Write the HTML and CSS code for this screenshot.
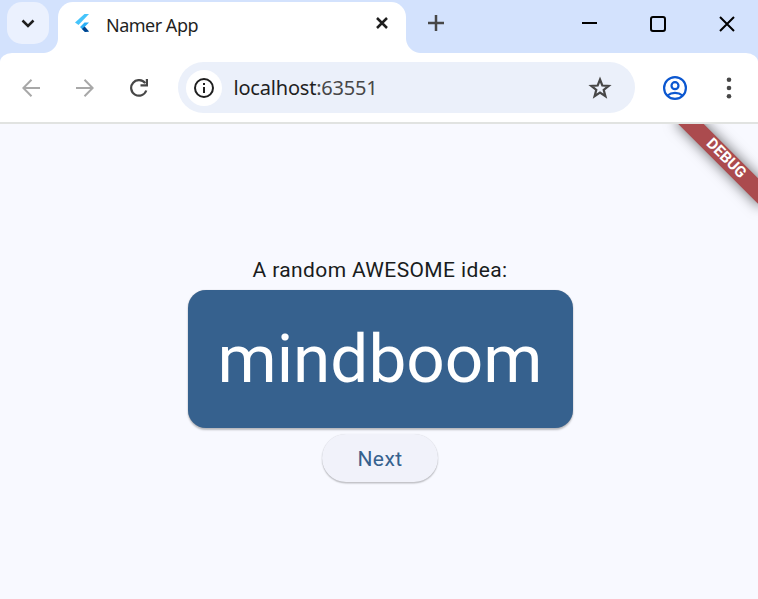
FILE: index.html
```
<!DOCTYPE html>
<html lang="en">
<head>
<meta charset="utf-8">
<title>Namer App</title>
<link rel="stylesheet" href="styles.css">
</head>
<body>
<div class="window">
  <header class="tabstrip">
    <button class="tab-search" aria-label="Search tabs"><svg width="14" height="9" viewBox="0 0 14 9"><path d="M1.500 1.500 7 7l5.500-5.500" fill="none" stroke="#1f1f1f" stroke-width="2.500"/></svg></button>
    <div class="tab">
      <svg class="favicon" width="15" height="19" viewBox="0 0 15 19"><path d="M9.500 0H14L3.500 11 0 8.500z" fill="#45c4fb"/><path d="M9.500 8.500H14L9.500 13l4.500 4.500-4 .5-5-5z" fill="#29aef6"/><path d="m7 15 2.700-2.500L14 17.500l-4 .5z" fill="#01418b"/></svg>
      <span class="tab-title">Namer App</span>
      <svg class="tab-close" width="12" height="12" viewBox="0 0 12 12"><path d="m1 1 10 10M11 1 1 11" stroke="#1f1f1f" stroke-width="2.500"/></svg>
    </div>
    <svg class="new-tab" width="16" height="16" viewBox="0 0 16 16"><path d="M8 0v16M0 8h16" stroke="#474747" stroke-width="2.500"/></svg>
    <div class="controls">
      <svg width="15" height="16" viewBox="0 0 15 16"><path d="M0 8h15" stroke="#000" stroke-width="2"/></svg>
      <svg width="16" height="16" viewBox="0 0 16 16"><rect x="1" y="1" width="14" height="14" rx="2" fill="none" stroke="#000" stroke-width="2"/></svg>
      <svg width="16" height="16" viewBox="0 0 16 16"><path d="m1 1 14 14M15 1 1 15" stroke="#000" stroke-width="2"/></svg>
    </div>
  </header>
  <nav class="toolbar">
    <svg class="nav-icon back" width="18" height="18" viewBox="0 0 18 18"><path d="M18 9H1.500M9.500.800 1.300 9l8.200 8.200" fill="none" stroke="#a8a8a8" stroke-width="2"/></svg>
    <svg class="nav-icon forward" width="18" height="18" viewBox="0 0 18 18"><path d="M0 9h16.500M8.500.800 16.700 9l-8.200 8.200" fill="none" stroke="#a8a8a8" stroke-width="2"/></svg>
    <svg class="nav-icon reload" width="18" height="18" viewBox="0 0 18 18"><path d="M16.300 11.500A7.800 7.800 0 1 1 15.200 4.200" fill="none" stroke="#474747" stroke-width="2.200"/><path d="M15.800 0H18v7.500h-7.500V5.300h5.300z" fill="#474747"/></svg>
    <div class="address">
      <span class="site-info"><svg width="20" height="20" viewBox="0 0 20 20"><circle cx="10" cy="10" r="9" fill="none" stroke="#1f1f1f" stroke-width="2"/><path d="M9 5h2v2H9zM9 9h2v6H9z" fill="#1f1f1f"/></svg></span>
      <span class="url">localhost<span class="port">:63551</span></span>
      <svg class="star" width="24" height="24" viewBox="0 0 24 24"><path d="m12 3.500 2.300 6 6.400.4-5 4 1.700 6.300-5.400-3.600-5.400 3.600 1.700-6.300-5-4 6.400-.4z" fill="none" stroke="#474747" stroke-width="2.200"/></svg>
    </div>
    <svg class="profile" width="24" height="24" viewBox="0 0 24 24" fill="none" stroke="#0b57d0" stroke-width="2.200"><circle cx="12" cy="12" r="10.900"/><circle cx="12" cy="9.700" r="3.500"/><path d="M4.500 19.500c4.200-3.600 10.800-3.600 15 0"/></svg>
    <svg class="more" width="6" height="22" viewBox="0 0 6 22" fill="#474747"><circle cx="3" cy="2.700" r="2.300"/><circle cx="3" cy="11" r="2.300"/><circle cx="3" cy="19.300" r="2.300"/></svg>
  </nav>
  <main class="page">
    <p class="caption">A random AWESOME idea:</p>
    <div class="card">mindboom</div>
    <button class="next">Next</button>
    <div class="ribbon">DEBUG</div>
  </main>
</div>
</body>
</html>
```

FILE: styles.css
```
* { box-sizing: border-box; }
body { margin: 0; font-family: Roboto, sans-serif; }
button { border: 0; padding: 0; font: inherit; }
svg { display: block; flex: none; }
.window { width: 758px; height: 599px; display: flex; flex-direction: column; overflow: hidden; background: #d3e2fd; }
.tabstrip { height: 53px; flex: none; display: flex; align-items: flex-start; }
.tab-search { width: 42px; height: 42px; margin: 2px 9px 0 7px; border-radius: 15px; background: #ebf1fe; display: flex; align-items: center; justify-content: center; }
.tab { position: relative; width: 348px; height: 51px; margin-top: 2px; border-radius: 15px 15px 0 0; background: #fff; display: flex; padding: 0 18px 0 17px; }
.tab::before, .tab::after { content: ""; position: absolute; bottom: 0; width: 15px; height: 15px; }
.tab::before { left: -15px; background: radial-gradient(circle at 0 0, transparent 14.5px, #fff 15.5px); }
.tab::after { right: -15px; background: radial-gradient(circle at 100% 0, transparent 14.5px, #fff 15.5px); }
.favicon { margin-top: 12px; }
.tab-title { margin: 10px auto 0 16px; font: 18px/26px "Noto Sans", sans-serif; color: #1f1f1f; letter-spacing: -.5px; }
.tab-close { margin-top: 15px; }
.new-tab { margin: 15px 0 0 22px; }
.controls { display: flex; gap: 53px; margin: 16px 23px 0 auto; }
.controls svg:first-child { margin: -1px 0 0 0; }
.toolbar { height: 71px; flex: none; display: flex; align-items: center; background: #fff; border-bottom: 2px solid #e1e3e1; border-radius: 12px 12px 0 0 / 9px 9px 0 0; padding: 0 26px 0 22px; }
.forward { margin-left: 36px; }
.reload { margin-left: 36px; }
.address { width: 457px; height: 51px; margin-left: 30px; border-radius: 26px; background: #ebf0fa; display: flex; align-items: center; padding: 0 23px 0 8px; }
.site-info { width: 36px; height: 36px; border-radius: 50%; background: #fff; display: flex; align-items: center; justify-content: center; }
.url { margin: 0 auto 0 11.5px; font: 20px/28px "Noto Sans", sans-serif; color: #1f1f1f; letter-spacing: -.2px; }
.port { color: #474747; }
.profile { margin-left: 28px; }
.more { margin-left: auto; }
.page { position: relative; flex: 1; overflow: hidden; background: #f8f9ff; display: flex; flex-direction: column; align-items: center; padding: 131px 0 0 2px; }
.caption { margin: 0; font-size: 21px; line-height: 30px; letter-spacing: .375px; color: #191c20; white-space: nowrap; }
.card { width: 385px; height: 138px; margin-top: 5px; border-radius: 18px; background: #36618e; color: #fff; font-size: 67.5px; line-height: 138px; text-align: center; box-shadow: 0 1.5px 2px rgba(0,0,0,.25), 0 0 1px rgba(0,0,0,.2); }
.next { width: 116px; height: 48px; margin-top: 6px; border-radius: 24px; background: #f1f2fa; color: #36618e; font-size: 21px; font-weight: 400; line-height: 50px; letter-spacing: .4px; box-shadow: 0 1.5px 1.5px rgba(0,0,0,.22), 0 0 1px rgba(0,0,0,.15); }
.ribbon { position: absolute; left: 664.500px; top: 24.600px; width: 120px; height: 18px; transform: rotate(45deg); background: #ab4b4e; color: #fff; font-size: 15.300px; font-weight: 700; line-height: 17px; padding-left: 2px; text-align: center; box-shadow: 0 0 14px rgba(0,0,0,.6); }
```
